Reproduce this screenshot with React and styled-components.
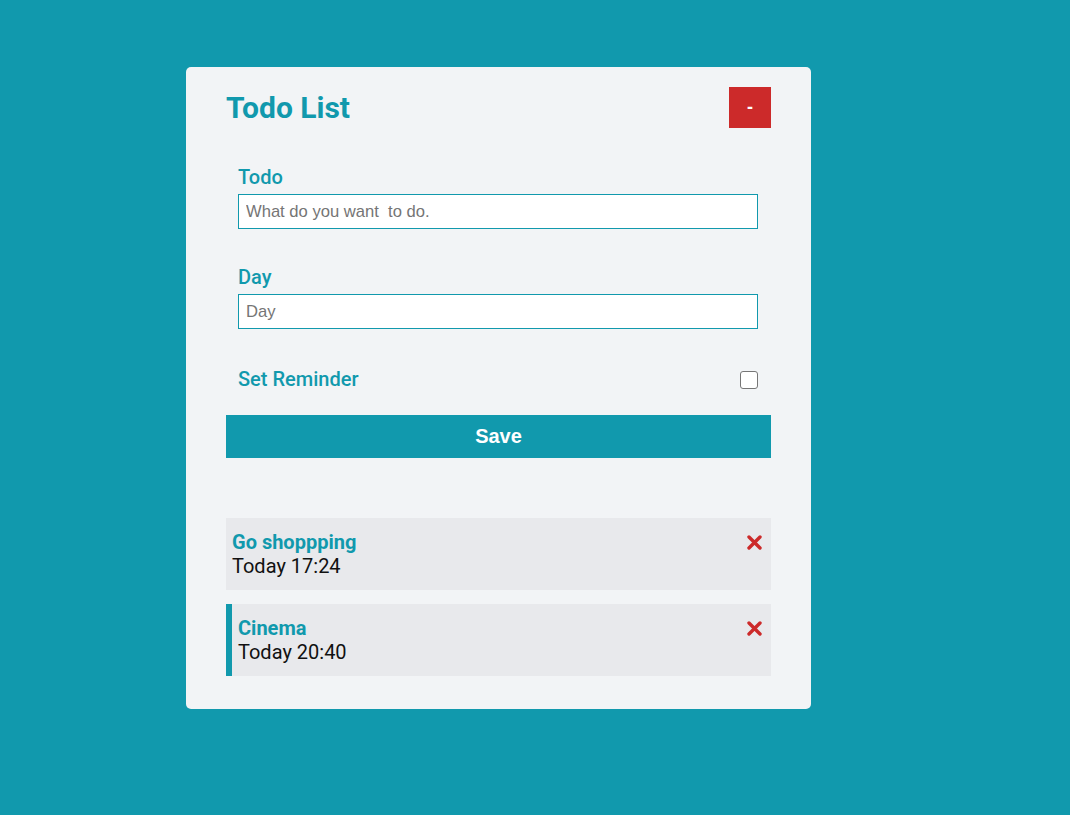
import styled, { createGlobalStyle } from 'styled-components';

const teal = '#1199ad';
const red = '#cc2a2a';

const GlobalStyle = createGlobalStyle`
  html, body {
    margin: 0;
    padding: 0;
    background: ${teal};
    font-family: Roboto, 'Liberation Sans', sans-serif;
  }
`;

const Page = styled.div`
  min-height: 815px;
  padding: 67px 0 0 186px;
  box-sizing: border-box;
`;

const Card = styled.div`
  width: 625px;
  box-sizing: border-box;
  background: #f2f4f6;
  border-radius: 5px;
  padding: 20px 40px 33px;
`;

const Header = styled.header`
  display: flex;
  align-items: center;
  justify-content: space-between;
  height: 41px;
`;

const Title = styled.h1`
  margin: 0;
  font-size: 30px;
  font-weight: 700;
  line-height: 36px;
  color: ${teal};
`;

const ToggleButton = styled.button`
  width: 42px;
  height: 41px;
  border: none;
  background: ${red};
  color: #fff;
  font-family: 'Liberation Sans', Arial, sans-serif;
  font-size: 18px;
  font-weight: 700;
  cursor: pointer;
`;

const Form = styled.form`
  margin-top: 38px;
`;

const Field = styled.div`
  margin: 0 13px 37px 12px;
`;

const Label = styled.label`
  display: block;
  font-size: 20px;
  font-weight: 500;
  line-height: 22px;
  color: ${teal};
  margin-bottom: 6px;
`;

const Input = styled.input`
  display: block;
  width: 100%;
  height: 35px;
  box-sizing: border-box;
  border: 1px solid ${teal};
  padding: 0 7px;
  font-family: 'Liberation Sans', Arial, sans-serif;
  font-size: 16.6px;
  background: #fff;
  outline: none;

  &::placeholder {
    color: #757575;
  }
`;

const CheckRow = styled.div`
  display: flex;
  align-items: center;
  justify-content: space-between;
  height: 26px;
  margin: 0 13px 23px 12px;
`;

const CheckLabel = styled(Label)`
  margin: 0;
`;

const Checkbox = styled.input`
  appearance: none;
  width: 18px;
  height: 18px;
  margin: 1px 0 0;
  border: 1.5px solid #767676;
  border-radius: 3px;
  background: #fff;
  box-sizing: border-box;
`;

const SaveButton = styled.button`
  display: block;
  width: 100%;
  height: 43px;
  border: none;
  background: ${teal};
  color: #fff;
  font-family: 'Liberation Sans', Arial, sans-serif;
  font-size: 20px;
  font-weight: 700;
  cursor: pointer;
`;

const List = styled.div`
  margin-top: 60px;
  display: flex;
  flex-direction: column;
  gap: 14px;
`;

const Item = styled.div`
  background: #e8e9ec;
  height: 72px;
  box-sizing: border-box;
  padding: 11px 9px 0 6px;
  border-left: ${(p) => (p.$reminder ? `6px solid ${teal}` : 'none')};
`;

const ItemTop = styled.div`
  display: flex;
  align-items: center;
  justify-content: space-between;
`;

const ItemTitle = styled.h3`
  margin: 0;
  font-size: 20px;
  font-weight: 700;
  line-height: 26px;
  color: ${teal};
`;

const ItemDay = styled.p`
  margin: 0;
  font-size: 20px;
  line-height: 23px;
  color: #111;
`;

const DeleteIcon = () => (
  <svg width="15" height="15" viewBox="0 0 15 15">
    <path d="M2 2 L13 13 M13 2 L2 13" stroke={red} strokeWidth="3.4" strokeLinecap="round" />
  </svg>
);

const todos = [
  { id: 1, text: 'Go shoppping', day: 'Today 17:24', reminder: false },
  { id: 2, text: 'Cinema', day: 'Today 20:40', reminder: true },
];

export default function App() {
  return (
    <Page>
      <GlobalStyle />
      <Card>
        <Header>
          <Title>Todo List</Title>
          <ToggleButton>-</ToggleButton>
        </Header>
        <Form onSubmit={(e) => e.preventDefault()}>
          <Field>
            <Label>Todo</Label>
            <Input type="text" placeholder="What do you want  to do." />
          </Field>
          <Field>
            <Label>Day</Label>
            <Input type="text" placeholder="Day" />
          </Field>
          <CheckRow>
            <CheckLabel>Set Reminder</CheckLabel>
            <Checkbox type="checkbox" />
          </CheckRow>
          <SaveButton type="submit">Save</SaveButton>
        </Form>
        <List>
          {todos.map((t) => (
            <Item key={t.id} $reminder={t.reminder}>
              <ItemTop>
                <ItemTitle>{t.text}</ItemTitle>
                <DeleteIcon />
              </ItemTop>
              <ItemDay>{t.day}</ItemDay>
            </Item>
          ))}
        </List>
      </Card>
    </Page>
  );
}
